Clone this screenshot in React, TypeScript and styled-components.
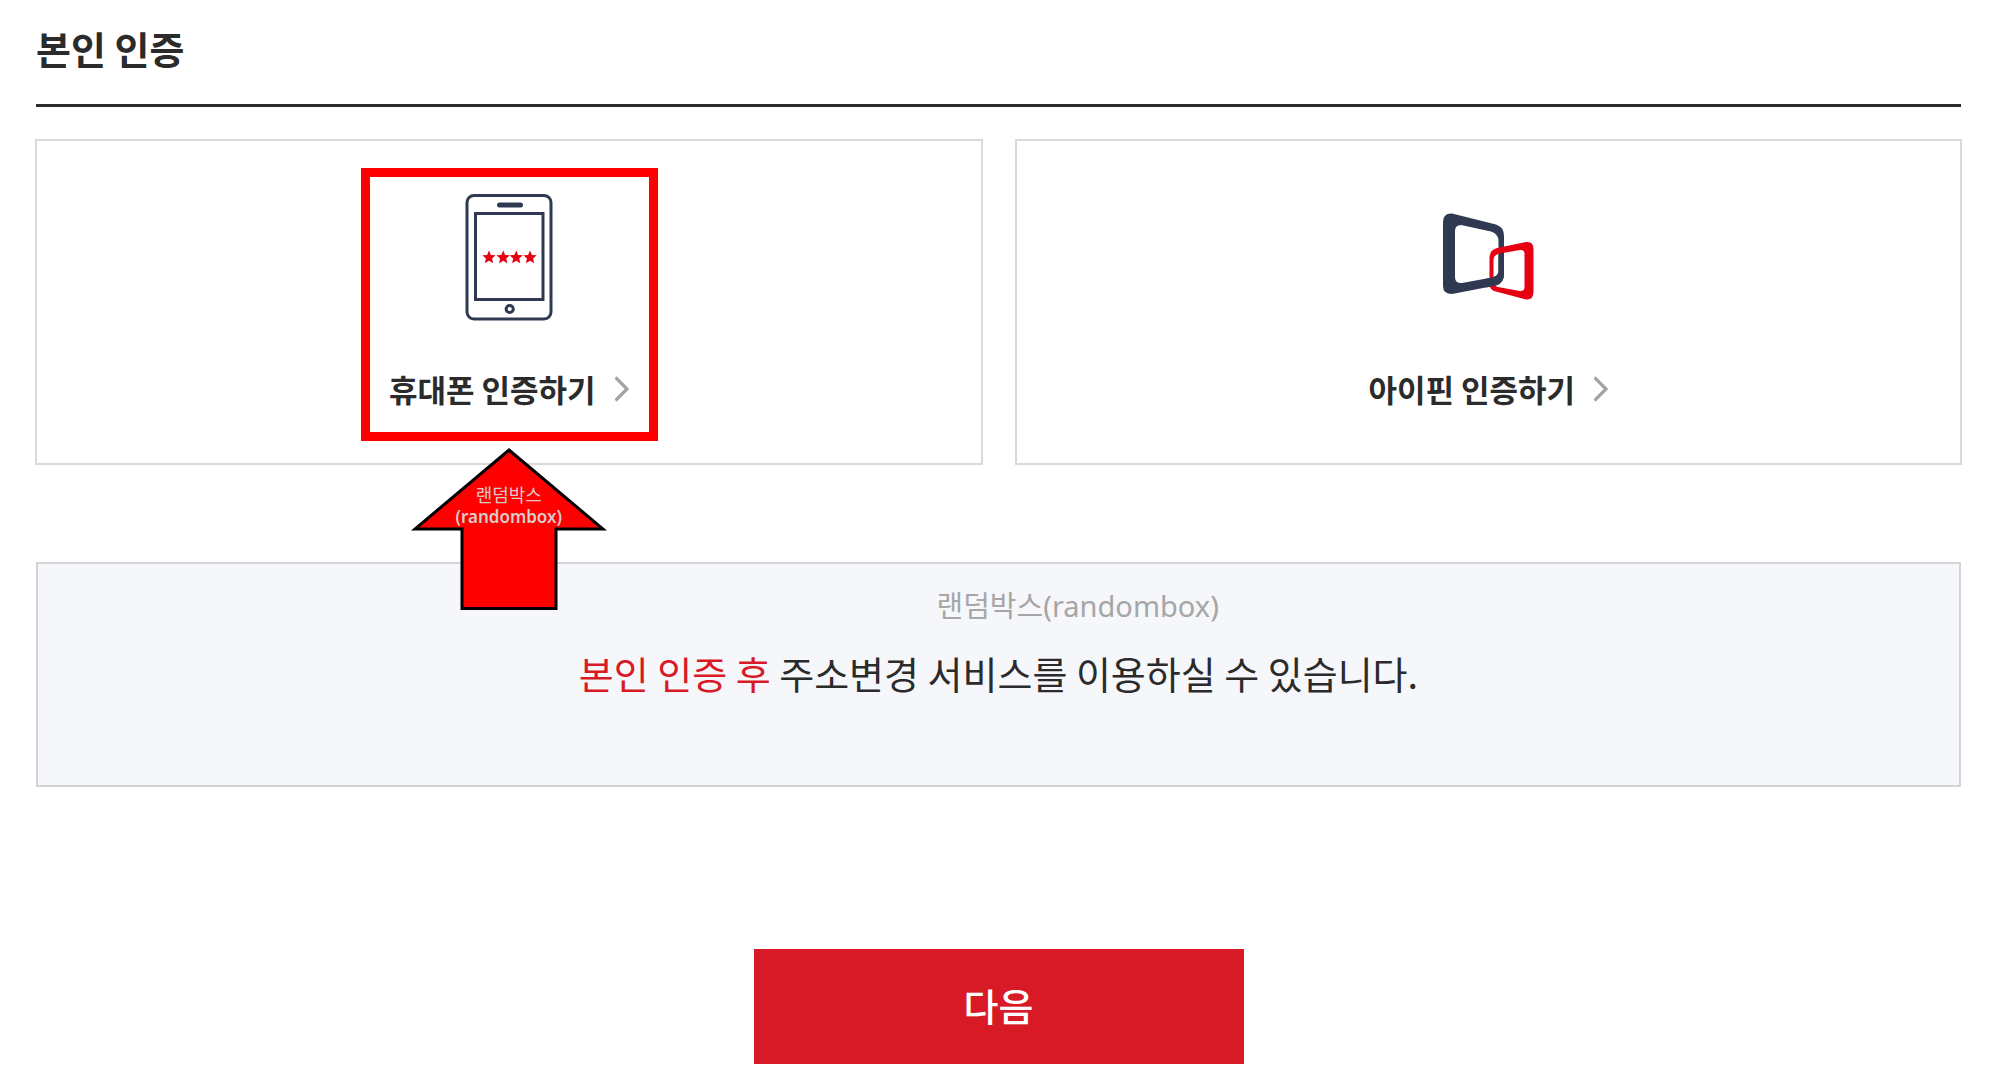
import React from "react";
import styled, { createGlobalStyle } from "styled-components";

const NAVY = "#2f3a52";
const RED = "#e60012";

const GlobalStyle = createGlobalStyle`
  *, *::before, *::after {
    box-sizing: border-box;
  }
  body {
    margin: 0;
    background: #fff;
    color: #2b2b2b;
    font-family: "Noto Sans CJK KR", "Noto Sans", sans-serif;
  }
`;

const Page = styled.main`
  padding: 0 39px 25px 36px;
`;

const Title = styled.h1`
  margin: 0 0 32px;
  padding: 20px 0 28px;
  border-bottom: 3px solid #2b2b2b;
  font-size: 38px;
  line-height: 56px;
  font-weight: 700;
`;

const Methods = styled.section`
  display: grid;
  grid-template-columns: 1fr 1fr;
  gap: 32px;
  margin: 0 -1px 97px;
`;

const MethodCell = styled.div`
  position: relative;
`;

const MethodCard = styled.a`
  display: flex;
  flex-direction: column;
  align-items: center;
  gap: 46px;
  padding: 52px 24px;
  border: 2px solid #d9d9d9;
  color: inherit;
  text-decoration: none;
`;

const IconSlot = styled.span`
  display: flex;
  align-items: center;
  height: 128px;
`;

const MethodLabel = styled.span`
  display: flex;
  align-items: center;
  gap: 19px;
  font-size: 31px;
  line-height: 44px;
  font-weight: 700;
`;

const Highlight = styled.div`
  position: absolute;
  top: 29px;
  left: calc(50% - 148px);
  width: 297px;
  height: 273px;
  border: 9px solid #f00;
  pointer-events: none;
`;

const Pointer = styled.div`
  position: absolute;
  z-index: 1;
  top: 308px;
  left: calc(50% - 98px);
  width: 196px;
  height: 164px;
  pointer-events: none;

  svg {
    display: block;
  }
`;

const PointerText = styled.p`
  position: absolute;
  top: 38px;
  left: 0;
  width: 100%;
  margin: 0;
  color: #dccaca;
  font-family: "Noto Sans", "Noto Sans CJK KR", sans-serif;
  font-size: 17px;
  line-height: 21px;
  text-align: center;
`;

const PointerName = styled.span`
  display: block;
  font-size: 18px;
`;

const PointerAlias = styled.span`
  display: block;
  font-weight: 600;
`;

const Notice = styled.section`
  position: relative;
  margin-bottom: 162px;
  padding: 81px 24px 84px;
  border: 2px solid #d2d4d6;
  background: #f6f7fb;
  text-align: center;
`;

const NoticeText = styled.p`
  margin: 0;
  font-size: 38px;
  line-height: 56px;
`;

const Accent = styled.em`
  color: #d81926;
  font-style: normal;
`;

const Watermark = styled.span`
  position: absolute;
  top: 22px;
  left: calc(50% - 62px);
  color: #a6a6a6;
  font-family: "Noto Sans", "Noto Sans CJK KR", sans-serif;
  font-size: 29px;
  line-height: 40px;
`;

const NextButton = styled.button`
  display: block;
  width: 490px;
  max-width: 100%;
  height: 115px;
  margin: 0 auto;
  padding: 0 0 4px;
  border: 0;
  background: #d81926;
  color: #fff;
  font-family: inherit;
  font-size: 38px;
  line-height: 56px;
  font-weight: 500;
  cursor: pointer;
`;

const starPath = (cx: number, cy: number, r: number) =>
  Array.from({ length: 10 }, (_, i) => {
    const radius = i % 2 ? r * 0.46 : r;
    const angle = (Math.PI / 5) * i - Math.PI / 2;
    return `${(cx + radius * Math.cos(angle)).toFixed(2)},${(cy + radius * Math.sin(angle)).toFixed(2)}`;
  }).join(" ");

function PhoneIcon() {
  return (
    <svg width="88" height="128" viewBox="0 0 88 128" fill="none" aria-hidden="true">
      <rect x="2" y="2.5" width="84" height="123.5" rx="7" stroke={NAVY} strokeWidth="3" />
      <rect x="32" y="9.5" width="26" height="5" rx="2.5" fill={NAVY} />
      <rect x="10.5" y="20.5" width="67.5" height="86" stroke={NAVY} strokeWidth="3" />
      <circle cx="44.7" cy="116" r="3.6" stroke={NAVY} strokeWidth="3" />
      {[24, 38.2, 51.2, 65].map((x) => (
        <polygon key={x} points={starPath(x, 64.5, 7)} fill={RED} />
      ))}
    </svg>
  );
}

function IpinIcon() {
  return (
    <svg width="92" height="128" viewBox="1442 193 92 128" aria-hidden="true">
      <path
        fill={NAVY}
        fillRule="evenodd"
        d="M1452 213.5 Q1443 213 1443 222 V286 Q1443 294 1452 294 L1496 285.5 Q1504 283 1504 274 V236 Q1504 227 1496 224.5 Z M1461 225 L1491 231.5 Q1498.5 234 1498.5 241 V271 Q1498.5 276 1492 277.5 L1462 283 Q1455 283.5 1455 277 V231 Q1455 225 1461 225 Z"
      />
      <path
        fill={RED}
        fillRule="evenodd"
        d="M1497 248 L1526 242 Q1533.5 241 1533.5 249 V292 Q1533.5 300 1526 299.5 L1494 291 Q1489.5 289 1489.5 284 V258 Q1489.5 250 1497 248 Z M1500 253.5 L1520 250 Q1524.5 249.5 1524.5 254 V287 Q1524.5 291.5 1520 291 L1498 287 Q1493.5 286 1493.5 282 V260 Q1493.5 255 1500 253.5 Z"
      />
      <path
        fill={NAVY}
        d="M1486 278.8 L1492 277.5 Q1498.5 276 1498.5 271 V255 H1504 V274 Q1504 283 1496 285.5 L1486 287.5 Z"
      />
    </svg>
  );
}

function Chevron() {
  return (
    <svg width="14" height="26" viewBox="0 0 14 26" fill="none" aria-hidden="true">
      <path d="M0.5 1.5 L12 13 L0.5 24.5" stroke="#a3a3a3" strokeWidth="3.2" />
    </svg>
  );
}

interface MethodProps {
  icon: React.ReactNode;
  label: string;
  children?: React.ReactNode;
}

function Method({ icon, label, children }: MethodProps) {
  return (
    <MethodCell>
      <MethodCard href="#">
        <IconSlot>{icon}</IconSlot>
        <MethodLabel>
          {label}
          <Chevron />
        </MethodLabel>
      </MethodCard>
      {children}
    </MethodCell>
  );
}

export default function App() {
  return (
    <>
      <GlobalStyle />
      <Page>
        <Title>본인 인증</Title>
        <Methods>
          <Method icon={<PhoneIcon />} label="휴대폰 인증하기">
            <Highlight />
            <Pointer>
              <svg width="196" height="164" viewBox="0 0 196 164" aria-hidden="true">
                <path
                  d="M98 3 L192 82 H145 V161.5 H51 V82 H4 Z"
                  fill="#f00"
                  stroke="#000"
                  strokeWidth="3"
                />
              </svg>
              <PointerText>
                <PointerName>랜덤박스</PointerName>
                <PointerAlias>(randombox)</PointerAlias>
              </PointerText>
            </Pointer>
          </Method>
          <Method icon={<IpinIcon />} label="아이핀 인증하기" />
        </Methods>
        <Notice>
          <Watermark>랜덤박스(randombox)</Watermark>
          <NoticeText>
            <Accent>본인 인증 후</Accent> 주소변경 서비스를 이용하실 수 있습니다.
          </NoticeText>
        </Notice>
        <NextButton type="button">다음</NextButton>
      </Page>
    </>
  );
}
